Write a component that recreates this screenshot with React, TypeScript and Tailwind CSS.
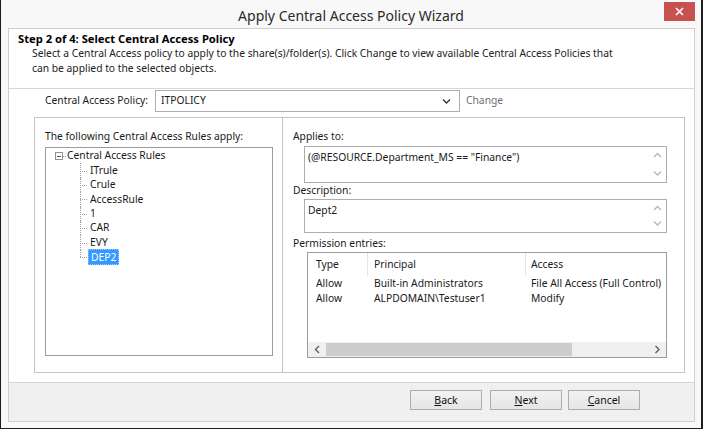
import React from 'react';

const RULES = ['ITrule', 'Crule', 'AccessRule', '1', 'CAR', 'EVY', 'DEP2'];

const ENTRIES = [
  { type: 'Allow', principal: 'Built-in Administrators', access: 'File All Access (Full Control)' },
  { type: 'Allow', principal: 'ALPDOMAIN\\Testuser1', access: 'Modify' },
];

// small chevron glyph used by combobox and scroll arrows
function Chevron({ dir, color = '#b8b8b8' }: { dir: 'up' | 'down' | 'left' | 'right'; color?: string }) {
  const d = {
    up: 'M1 5 L4.5 1.5 L8 5',
    down: 'M1 1.5 L4.5 5 L8 1.5',
    left: 'M5 1 L1.5 4.5 L5 8',
    right: 'M1.5 1 L5 4.5 L1.5 8',
  }[dir];
  const vertical = dir === 'up' || dir === 'down';
  return (
    <svg width={vertical ? 9 : 7} height={vertical ? 7 : 9} viewBox={vertical ? '0 0 9 7' : '0 0 7 9'}>
      <path d={d} fill="none" stroke={color} strokeWidth="1.4" />
    </svg>
  );
}

function TextArea({ value, h }: { value: string; h: string }) {
  return (
    <div className={`ml-[11px] w-[363px] ${h} border border-[#abadb3] bg-white flex`}>
      <div className="flex-1 pl-[3px] pt-[3px] leading-[14px]">{value}</div>
      <div className="w-[17px] flex flex-col justify-between items-center py-[5px]">
        <Chevron dir="up" />
        <Chevron dir="down" />
      </div>
    </div>
  );
}

function Button({ label, k }: { label: string; k: string }) {
  const rest = label.slice(1);
  return (
    <button className="w-[72px] h-[20px] border border-[#acacac] bg-gradient-to-b from-[#f2f2f2] to-[#e5e5e5] text-[10.5px] leading-none text-[#111]">
      <span className="underline underline-offset-1">{k}</span>
      {rest}
    </button>
  );
}

export default function App() {
  return (
    <div className="w-[703px] h-[429px] bg-[#f8f8f8] border-l border-r-2 border-b border-[#1e1e1e] flex flex-col font-['Noto_Sans',sans-serif] text-[10.3px] text-[#1a1a1a] overflow-hidden">
      {/* title bar */}
      <div className="h-[28px] relative flex items-center justify-center">
        <span className="text-[14px] text-[#2a2a2a] mt-[2px]">Apply Central Access Policy Wizard</span>
        <div className="absolute right-[6px] top-[2px] w-[31px] h-[19px] bg-[#c75050] flex items-center justify-center">
          <svg width="9" height="9" viewBox="0 0 9 9">
            <path d="M1 1 L8 8 M8 1 L1 8" stroke="white" strokeWidth="1.6" />
          </svg>
        </div>
      </div>

      {/* client area */}
      <div className="ml-[7px] mr-[6px] h-[394px] border border-[#cfcfcf] bg-white flex flex-col">
        {/* header */}
        <div className="h-[60px] border-b border-[#d6d6d6] pl-[9px] pt-[3px]">
          <div className="font-bold text-[11.2px] leading-[14px] text-black">Step 2 of 4: Select Central Access Policy</div>
          <div className="pl-[14px] leading-[15px] text-[#222]">
            Select a Central Access policy to apply to the share(s)/folder(s). Click Change to view available Central Access Policies that
            <br />
            can be applied to the selected objects.
          </div>
        </div>

        {/* main */}
        <div className="h-[293px] flex flex-col">
          <div className="mt-[1px] h-[22px] flex items-center pl-[36px]">
            <span className="w-[110px]">Central Access Policy:</span>
            <div className="w-[305px] h-[22px] border border-[#abadb3] flex items-center pl-[5px] pr-[8px]">
              <span className="flex-1">ITPOLICY</span>
              <Chevron dir="down" color="#333" />
            </div>
            <span className="ml-[6px] text-[#707070]">Change</span>
          </div>

          <div className="mt-[5px] ml-[25px] w-[651px] h-[256px] border border-[#c4c4c4] flex">
            {/* left panel */}
            <div className="w-[248px] border-r border-[#c4c4c4] pl-[10px] pt-[11px]">
              <div className="leading-[14px]">The following Central Access Rules apply:</div>
              <div className="mt-[4px] w-[228px] h-[209px] border border-[#9c9c9c] pt-[1px]">
                <div className="h-[14.4px] flex items-center pl-[9px]">
                  <div className="w-[8px] h-[8px] border border-[#919191] flex items-center justify-center">
                    <div className="w-[4px] h-px bg-[#3a5a9a]" />
                  </div>
                  <div className="w-[3px] border-t border-dotted border-[#a0a0a0]" />
                  <span className="ml-[1px]">Central Access Rules</span>
                </div>
                {RULES.map((r, i) => {
                  const last = i === RULES.length - 1;
                  return (
                    <div key={r} className="h-[14.4px] flex items-center">
                      <div className="ml-[34px] w-[8px] h-full relative">
                        <div className={`absolute left-0 top-0 border-l border-dotted border-[#a0a0a0] ${last ? 'h-1/2' : 'h-full'}`} />
                        <div className="absolute left-0 top-1/2 w-[7px] border-t border-dotted border-[#a0a0a0]" />
                      </div>
                      {last ? (
                        <span className="bg-[#3399ff] text-white px-[2px] leading-[14px] border border-dotted border-[#99ccff]">{r}</span>
                      ) : (
                        <span className="ml-[2px]">{r}</span>
                      )}
                    </div>
                  );
                })}
              </div>
            </div>

            {/* right panel */}
            <div className="flex-1 pl-[10px] pt-[11px]">
              <div className="leading-[14px]">Applies to:</div>
              <div className="mt-[3px]">
                <TextArea value={'(@RESOURCE.Department_MS == "Finance")'} h="h-[37px]" />
              </div>
              <div className="leading-[14px]">Description:</div>
              <div className="mt-[2px]">
                <TextArea value="Dept2" h="h-[34px]" />
              </div>
              <div className="mt-[3px] leading-[14px]">Permission entries:</div>
              <div className="mt-[2px] ml-[14px] w-[360px] h-[106px] border border-[#9c9c9c] flex flex-col overflow-hidden">
                <div className="h-[23px] flex items-center shrink-0">
                  <div className="w-[60px] h-full border-r border-[#e5e5e5] flex items-center pl-[8px]">Type</div>
                  <div className="w-[158px] h-full border-r border-[#e5e5e5] flex items-center pl-[6px]">Principal</div>
                  <div className="flex-1 whitespace-nowrap pl-[5px]">Access</div>
                </div>
                <div className="flex-1">
                  {ENTRIES.map((e) => (
                    <div key={e.principal} className="h-[15px] flex items-center whitespace-nowrap">
                      <div className="w-[60px] pl-[8px]">{e.type}</div>
                      <div className="w-[158px] pl-[6px]">{e.principal}</div>
                      <div className="pl-[5px]">{e.access}</div>
                    </div>
                  ))}
                </div>
                <div className="h-[15px] bg-[#f0f0f0] flex items-center shrink-0">
                  <div className="w-[18px] flex justify-center">
                    <Chevron dir="left" color="#606060" />
                  </div>
                  <div className="w-[246px] h-[13px] bg-[#cdcdcd]" />
                  <div className="flex-1" />
                  <div className="w-[18px] flex justify-center">
                    <Chevron dir="right" color="#606060" />
                  </div>
                </div>
              </div>
            </div>
          </div>
        </div>

        {/* footer */}
        <div className="flex-1 border-t border-[#d4d4d4] bg-[#f0f0f0] flex justify-end items-start pt-[7px] pr-[54px]">
          <Button label="Back" k="B" />
          <div className="w-[8px]" />
          <Button label="Next" k="N" />
          <div className="w-[6px]" />
          <Button label="Cancel" k="C" />
        </div>
      </div>
    </div>
  );
}
